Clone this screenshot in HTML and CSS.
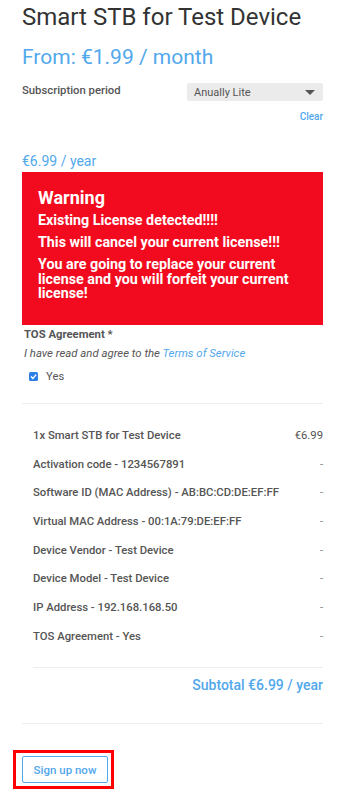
FILE: index.html
```html
<!DOCTYPE html>
<html lang="en">
<head>
<meta charset="utf-8">
<title>Smart STB for Test Device</title>
<link rel="stylesheet" href="styles.css">
</head>
<body>
<main class="page">
  <h1 class="title">Smart STB for Test Device</h1>
  <p class="from-price">From: €1.99 / month</p>

  <div class="period-row">
    <span class="period-label">Subscription period</span>
    <div class="select">
      <span class="select-value">Anually Lite</span>
      <svg class="select-arrow" width="10" height="5" viewBox="0 0 10 5"><path d="M0 0 L10 0 L5 5 Z" fill="#555"/></svg>
    </div>
  </div>
  <div class="clear-row"><a class="clear-link">Clear</a></div>

  <p class="year-price">€6.99 / year</p>

  <section class="warning">
    <h2 class="warning-title">Warning</h2>
    <p class="warning-text">Existing License detected!!!!</p>
    <p class="warning-text">This will cancel your current license!!!</p>
    <p class="warning-text">You are going to replace your current license and you will forfeit your current license!</p>
  </section>

  <div class="tos">
    <div class="tos-label">TOS Agreement *</div>
    <div class="tos-desc">I have read and agree to the <a class="tos-link">Terms of Service</a></div>
    <label class="check-row">
      <span class="check-box"><svg width="9" height="9" viewBox="0 0 9 9"><path d="M2 4.6 L3.8 6.4 L7.2 2.6" fill="none" stroke="#fff" stroke-width="1.4"/></svg></span>
      <span class="check-text">Yes</span>
    </label>
  </div>

  <hr class="divider top-divider">

  <section class="summary">
    <div class="row"><span class="row-label">1x Smart STB for Test Device</span><span class="row-value">€6.99</span></div>
    <div class="row"><span class="row-label">Activation code - 1234567891</span><span class="row-value dash">-</span></div>
    <div class="row"><span class="row-label">Software ID (MAC Address) - AB:BC:CD:DE:EF:FF</span><span class="row-value dash">-</span></div>
    <div class="row"><span class="row-label">Virtual MAC Address - 00:1A:79:DE:EF:FF</span><span class="row-value dash">-</span></div>
    <div class="row"><span class="row-label">Device Vendor - Test Device</span><span class="row-value dash">-</span></div>
    <div class="row"><span class="row-label">Device Model - Test Device</span><span class="row-value dash">-</span></div>
    <div class="row"><span class="row-label">IP Address - 192.168.168.50</span><span class="row-value dash">-</span></div>
    <div class="row"><span class="row-label">TOS Agreement - Yes</span><span class="row-value dash">-</span></div>
    <hr class="divider inner">
    <div class="subtotal">Subtotal €6.99 / year</div>
  </section>

  <hr class="divider bottom-divider">

  <div class="highlight">
    <button class="signup">Sign up now</button>
  </div>
</main>
</body>
</html>
```
FILE: styles.css
```css
html, body {
  margin: 0;
  padding: 0;
  background: #fff;
}
body {
  font-family: Roboto, "Liberation Sans", Arial, sans-serif;
  color: #555;
}
.page {
  width: 301px;
  padding-left: 22px;
}
.title {
  margin: 2px 0 0;
  font-size: 24px;
  line-height: 30px;
  font-weight: 400;
  color: #333;
}
.from-price {
  margin: 12px 0 0;
  font-size: 21px;
  line-height: 26px;
  font-weight: 400;
  color: #52a8ec;
}
.period-row {
  margin-top: 13px;
  display: flex;
  justify-content: space-between;
  align-items: flex-start;
}
.period-label {
  font-size: 11.3px;
  line-height: 13px;
  font-weight: 500;
  color: #555;
  padding-top: 1px;
}
.select {
  width: 136px;
  height: 18px;
  box-sizing: border-box;
  background: #ebebeb;
  border-radius: 2px;
  display: flex;
  align-items: center;
  justify-content: space-between;
  padding: 0 8px 0 7px;
}
.select-value {
  font-size: 11px;
  color: #555;
  line-height: 13px;
  padding-top: 1px;
}
.clear-row {
  margin-top: 10px;
  display: flex;
  justify-content: flex-end;
}
.clear-link {
  font-size: 10px;
  line-height: 12px;
  color: #52a8ec;
  font-weight: 500;
}
.year-price {
  margin: 30px 0 0;
  font-size: 14px;
  line-height: 17px;
  color: #52a8ec;
}
.warning {
  margin-top: 2px;
  background: #f20a1e;
  color: #fff;
  padding: 15px 16px 24px;
}
.warning-title {
  margin: 0 0 5px;
  font-size: 18px;
  line-height: 21px;
  font-weight: 700;
}
.warning-text {
  margin: 0 0 7.5px;
  font-size: 14.3px;
  line-height: 14.6px;
  font-weight: 700;
}
.warning-text:last-child {
  margin-bottom: 0;
}
.tos {
  padding-left: 2px;
  margin-top: 3px;
}
.tos-label {
  font-size: 11.3px;
  line-height: 13px;
  font-weight: 700;
  color: #555;
}
.tos-desc {
  margin-top: 6px;
  font-size: 11.4px;
  line-height: 13px;
  font-style: italic;
  color: #555;
}
.tos-link {
  color: #52a8ec;
}
.check-row {
  margin-top: 10px;
  display: flex;
  align-items: center;
  padding-left: 5px;
}
.check-box {
  width: 9px;
  height: 9px;
  background: #2d7fe8;
  border-radius: 1.5px;
  display: flex;
}
.check-text {
  margin-left: 8px;
  font-size: 11.3px;
  line-height: 13px;
  color: #555;
}
.divider {
  margin: 0;
  border: 0;
  height: 1px;
  background: #eeeeee;
}
.top-divider {
  margin-top: 20px;
}
.summary {
  padding-left: 11px;
  padding-top: 17px;
}
.row {
  display: flex;
  justify-content: space-between;
  font-size: 11.3px;
  line-height: 13px;
  padding: 7.85px 0;
}
.row-label {
  font-weight: 500;
  color: #555;
}
.row-value {
  color: #555;
}
.row-value.dash {
  color: #888;
}
.divider.inner {
  margin-top: 17px;
}
.subtotal {
  margin-top: 9px;
  text-align: right;
  font-size: 14px;
  line-height: 17px;
  font-weight: 500;
  color: #52a8ec;
  padding-bottom: 29px;
}
.highlight {
  display: inline-block;
  margin-top: 26px;
  margin-left: -9px;
  border: 3px solid #f00;
  padding: 3px 3px 3px 6px;
}
.signup {
  display: block;
  width: 86px;
  height: 27px;
  box-sizing: border-box;
  background: #fff;
  border: 1px solid #52a8ec;
  border-radius: 2px;
  color: #52a8ec;
  font-family: Roboto, "Liberation Sans", Arial, sans-serif;
  font-size: 11.5px;
  font-weight: 500;
  padding: 0;
}
```
